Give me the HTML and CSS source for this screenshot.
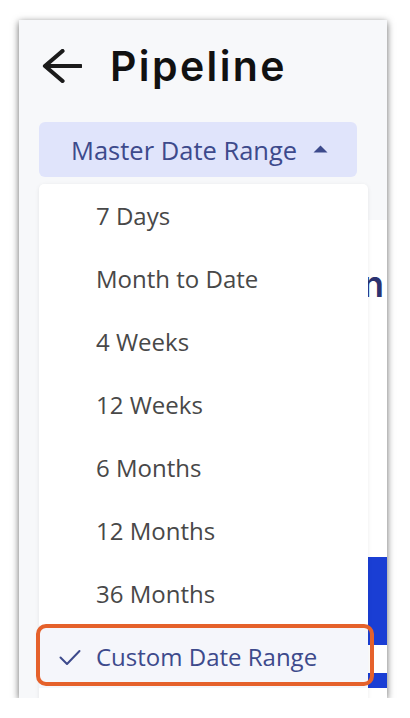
FILE: index.html
```html
<!DOCTYPE html>
<html lang="en">
<head>
<meta charset="utf-8">
<title>Pipeline</title>
<link rel="stylesheet" href="styles.css">
</head>
<body>
<div class="screen">
  <header class="topbar">
    <svg class="back" width="40" height="34" viewBox="0 0 40 34" aria-hidden="true">
      <path d="M3 17 H38.5 M20.5 2 L3 17 L20.5 32" fill="none" stroke="#1b1b1b" stroke-width="4.2" stroke-linecap="round" stroke-linejoin="round"/>
    </svg>
    <h1 class="title">Pipeline</h1>
  </header>

  <button class="range-btn" type="button">
    <span class="range-label">Master Date Range</span>
    <svg class="caret" width="15" height="8" viewBox="0 0 15 8" aria-hidden="true">
      <path d="M7.5 0.5 L14.5 7.5 H0.5 Z" fill="#3d4a8c"/>
    </svg>
  </button>

  <section class="card">
    <div class="card-head"><h2 class="card-title">Won</h2></div>
    <div class="chart">
      <div class="bar bar-a"></div>
      <div class="bar bar-b"></div>
    </div>
  </section>

  <ul class="menu">
    <li class="item">7 Days</li>
    <li class="item">Month to Date</li>
    <li class="item">4 Weeks</li>
    <li class="item">12 Weeks</li>
    <li class="item">6 Months</li>
    <li class="item">12 Months</li>
    <li class="item">36 Months</li>
    <li class="item selected">
      <svg class="check" width="22" height="17" viewBox="0 0 22 17" aria-hidden="true">
        <path d="M1.5 8.5 L8 15 L20.5 2" fill="none" stroke="#3d4a8c" stroke-width="2" stroke-linecap="round" stroke-linejoin="round"/>
      </svg>
      Custom Date Range
    </li>
  </ul>
</div>
</body>
</html>
```

FILE: styles.css
```css
* { box-sizing: border-box; }

html, body {
  margin: 0;
  padding: 0;
  background: #ffffff;
}

body {
  font-family: "Open Sans", "Liberation Sans", sans-serif;
  padding: 20px 0 0 19px;
}

.screen {
  position: relative;
  width: 368px;
  height: 678px;
  background: #f7f8fa;
  box-shadow: 0 2px 7px rgba(0, 0, 0, 0.6);
  overflow: hidden;
  display: flex;
  flex-direction: column;
}

.topbar {
  display: flex;
  align-items: center;
  height: 72px;
  padding: 20px 0 0 23px;
  flex: none;
}

.back {
  display: block;
  flex: none;
}

.title {
  margin: 0 0 0 28px;
  font-family: "Inter", "Noto Sans", sans-serif;
  font-weight: 600;
  font-size: 41px;
  line-height: 52px;
  letter-spacing: 2.4px;
  color: #111111;
}

.range-btn {
  flex: none;
  margin: 30px 0 0 20px;
  width: 318px;
  height: 55px;
  border: none;
  border-radius: 6px;
  background: #e0e4fb;
  display: flex;
  align-items: center;
  padding: 0 0 0 32px;
  gap: 16px;
  font-family: "Open Sans", "Liberation Sans", sans-serif;
  font-size: 25.5px;
  color: #3d4a8c;
  cursor: pointer;
}

.range-label {
  line-height: 34px;
}

.caret {
  display: block;
  margin-top: -2px;
}

.card {
  flex: none;
  margin: 43px 0 0 20px;
  background: #ffffff;
  padding-top: 42px;
  height: 520px;
}

.card-head {
  display: flex;
  justify-content: flex-end;
  padding-right: 3px;
  overflow: hidden;
}

.card-title {
  margin: 0;
  white-space: nowrap;
  font-family: "Inter", "Noto Sans", sans-serif;
  font-weight: 600;
  font-size: 36px;
  line-height: 44px;
  color: #2b3270;
}

.chart {
  padding-top: 251px;
  display: flex;
  flex-direction: column;
  gap: 28px;
}

.bar {
  background: #1a3ed4;
  width: 100%;
}

.bar-a { height: 88px; }
.bar-b { height: 15px; }

.menu {
  position: absolute;
  left: 20px;
  top: 164px;
  width: 329px;
  margin: 0;
  padding: 0 0 20px 0;
  list-style: none;
  background: #ffffff;
  border-radius: 5px;
  box-shadow: 0 1px 4px rgba(0, 0, 0, 0.08);
}

.item {
  position: relative;
  height: 63px;
  line-height: 63px;
  padding-left: 57px;
  font-size: 24px;
  color: #484848;
  white-space: nowrap;
}

.item.selected {
  background: #f5f6fb;
  color: #3d4a8c;
}

.item.selected::after {
  content: "";
  position: absolute;
  left: -3px;
  right: -6px;
  top: -1px;
  bottom: 2px;
  border: 4px solid #e5612b;
  border-radius: 10px;
}

.check {
  position: absolute;
  left: 20px;
  top: 24px;
}
```
